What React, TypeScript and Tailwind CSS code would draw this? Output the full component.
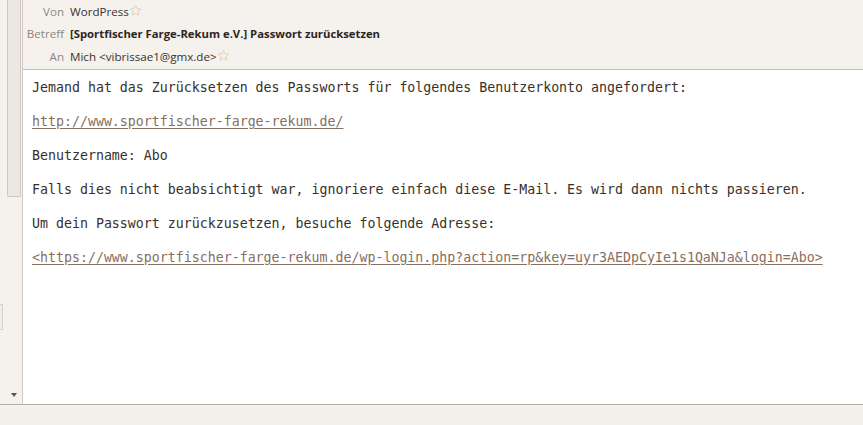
import React from 'react';

const Star = () => (
  <svg width="13" height="13" viewBox="0 0 24 24" className="inline-block">
    <path
      d="M12 2.5l2.9 6.1 6.6.8-4.9 4.6 1.3 6.6L12 17.3l-5.9 3.3 1.3-6.6-4.9-4.6 6.6-.8z"
      fill="#f7f0e4"
      stroke="#d9cdb8"
      strokeWidth="1.6"
      strokeLinejoin="round"
    />
  </svg>
);

const headerRows = [
  { label: 'Von', value: 'WordPress', star: true },
  { label: 'Betreff', value: '[Sportfischer Farge-Rekum e.V.] Passwort zurücksetzen', bold: true },
  { label: 'An', value: 'Mich <vibrissae1@gmx.de>', star: true, gap: true },
];

const mono = { fontFamily: '"DejaVu Sans Mono", monospace' };

export default function App() {
  return (
    <div
      className="w-[863px] h-[425px] flex flex-col bg-[#f5f1ed] overflow-hidden"
      style={{ fontFamily: '"Open Sans", "Noto Sans", sans-serif' }}
    >
      <div className="flex flex-1 min-h-0">
        {/* left scrollbar strip */}
        <div className="w-[23px] shrink-0 border-r border-[#d2cac3] flex flex-col relative">
          <div className="ml-[7px] w-[14px] h-[197px] bg-[#ece7e2] border border-t-0 border-[#cfc7c0] rounded-b-[2px]" />
          <div className="absolute left-0 top-[304px] w-[3px] h-[26px] border border-l-0 border-[#d8d1ca] bg-[#f1ece7]" />
          <div className="mt-auto mb-[7px] ml-[11px] w-0 h-0 border-l-[3px] border-r-[3px] border-t-[4px] border-l-transparent border-r-transparent border-t-[#5a524c]" />
        </div>

        <div className="flex-1 flex flex-col min-w-0">
          {/* header */}
          <div className="h-[70px] border-b border-[#c8bfb7] pt-[1px] text-[11.6px] leading-[16px]">
            {headerRows.map((r) => (
              <div
                key={r.label}
                className={`flex items-center h-[22px] ${r.gap ? 'mt-[1px]' : ''}`}
              >
                <span className="w-[41px] text-right text-[#8f8780] shrink-0">{r.label}</span>
                <span
                  className={`ml-[6px] ${r.bold ? 'font-bold text-[11.3px] text-[#2e2622]' : 'text-[#3b332e]'}`}
                >
                  {r.value}
                </span>
                {r.star && (
                  <span className="-mt-[5px]">
                    <Star />
                  </span>
                )}
              </div>
            ))}
          </div>

          {/* body */}
          <div
            className="flex-1 bg-white pl-[9px] pt-[10px] text-[13.28px] leading-[16px] text-[#3a302a] flex flex-col gap-[18px]"
            style={mono}
          >
            <p>Jemand hat das Zurücksetzen des Passworts für folgendes Benutzerkonto angefordert:</p>
            <p>
              <a className="text-[#86705f] underline underline-offset-2">
                http://www.sportfischer-farge-rekum.de/
              </a>
            </p>
            <p>Benutzername: Abo</p>
            <p>Falls dies nicht beabsichtigt war, ignoriere einfach diese E-Mail. Es wird dann nichts passieren.</p>
            <p>Um dein Passwort zurückzusetzen, besuche folgende Adresse:</p>
            <p>
              <a className="text-[#86705f] underline underline-offset-2">
                &lt;https://www.sportfischer-farge-rekum.de/wp-login.php?action=rp&amp;key=uyr3AEDpCyIe1s1QaNJa&amp;login=Abo&gt;
              </a>
            </p>
          </div>
        </div>
      </div>

      {/* bottom bar */}
      <div className="h-[21px] shrink-0 border-t border-[#b9aea5] bg-[#f3efeb]" />
    </div>
  );
}
